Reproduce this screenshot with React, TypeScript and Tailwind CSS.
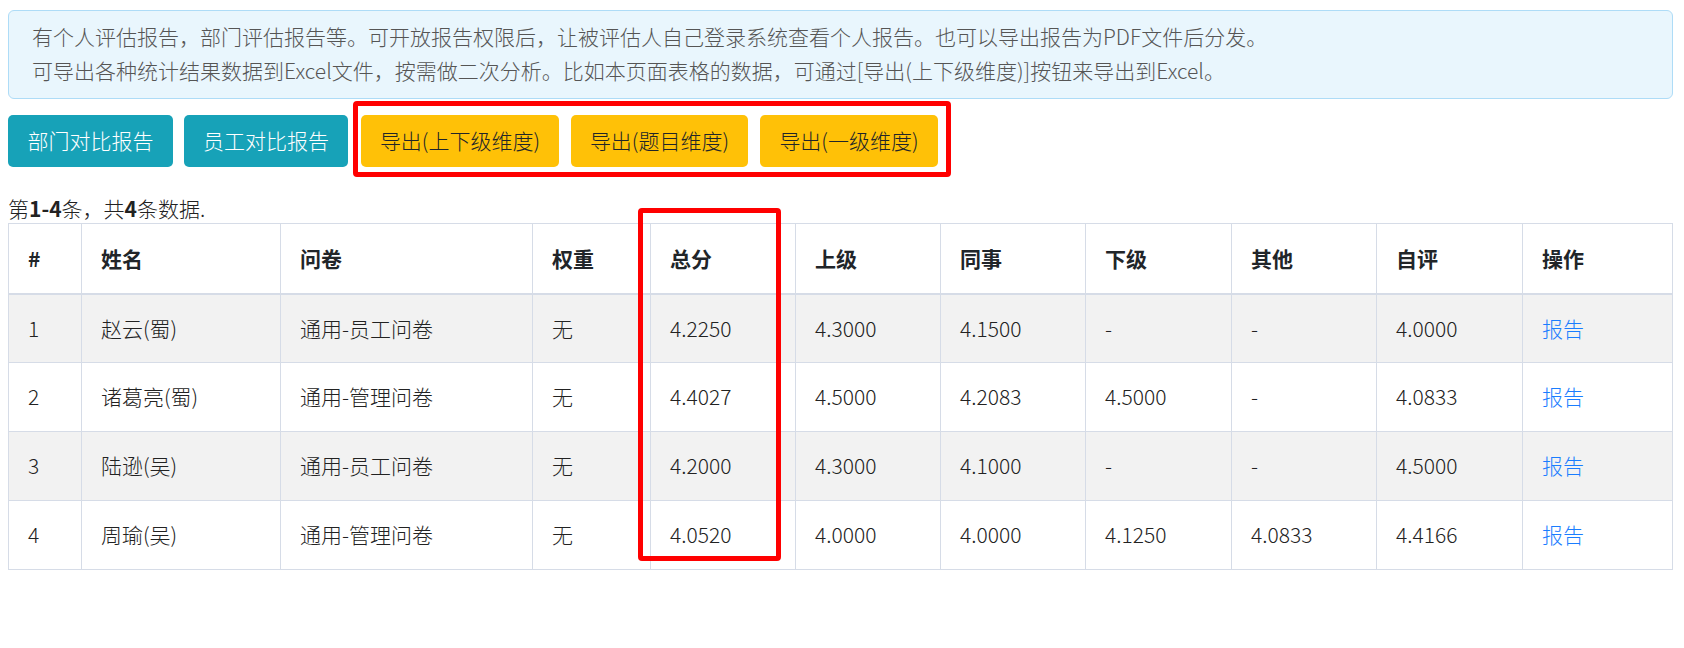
import React from "react";

const rows = [
  ["1", "赵云(蜀)", "通用-员工问卷", "无", "4.2250", "4.3000", "4.1500", "-", "-", "4.0000"],
  ["2", "诸葛亮(蜀)", "通用-管理问卷", "无", "4.4027", "4.5000", "4.2083", "4.5000", "-", "4.0833"],
  ["3", "陆逊(吴)", "通用-员工问卷", "无", "4.2000", "4.3000", "4.1000", "-", "-", "4.5000"],
  ["4", "周瑜(吴)", "通用-管理问卷", "无", "4.0520", "4.0000", "4.0000", "4.1250", "4.0833", "4.4166"],
];

const widths = [73, 199, 252, 118, 145, 145, 145, 146, 145, 146, 150];
const heads = ["#", "姓名", "问卷", "权重", "总分", "上级", "同事", "下级", "其他", "自评", "操作"];

export default function App() {
  return (
    <div className="relative w-[1684px] h-[648px] bg-white text-[21px] font-light text-[#212529] font-['Noto_Sans_CJK_SC','Noto_Sans',sans-serif]">
      <div className="ml-2 w-[1665px] pt-[10px]">
        <div className="h-[89px] rounded-[6px] border border-[#aedcf7] bg-[#e9f6fd] px-[23px] pt-[8px] leading-[34px] text-[#555]">
          <div>有个人评估报告，部门评估报告等。可开放报告权限后，让被评估人自己登录系统查看个人报告。也可以导出报告为PDF文件后分发。</div>
          <div>可导出各种统计结果数据到Excel文件，按需做二次分析。比如本页面表格的数据，可通过[导出(上下级维度)]按钮来导出到Excel。</div>
        </div>

        <div className="mt-4 flex h-[52px]">
          <button className="w-[165px] h-[52px] rounded-[5px] bg-[#17a2b8] text-white">部门对比报告</button>
          <button className="ml-[11px] w-[164px] h-[52px] rounded-[5px] bg-[#17a2b8] text-white">员工对比报告</button>
          <button className="ml-[13px] w-[198px] h-[52px] rounded-[5px] bg-[#ffc107] text-[#212529]">导出(上下级维度)</button>
          <button className="ml-[12px] w-[177px] h-[52px] rounded-[5px] bg-[#ffc107] text-[#212529]">导出(题目维度)</button>
          <button className="ml-[12px] w-[178px] h-[52px] rounded-[5px] bg-[#ffc107] text-[#212529]">导出(一级维度)</button>
        </div>

        <div className="mt-[26px] h-[30px] leading-[30px] text-[#222]">
          第<b className="font-bold">1-4</b>条，共<b className="font-bold">4</b>条数据.
        </div>

        <table className="w-[1664px] table-fixed border-collapse border border-[#d6dce7]">
          <colgroup>
            {widths.map((w, i) => (
              <col key={i} style={{ width: w }} />
            ))}
          </colgroup>
          <thead>
            <tr className="h-[70px]">
              {heads.map((h, i) => (
                <th
                  key={i}
                  className="border border-b-2 border-[#d6dce7] pl-[19px] text-left font-bold text-[#212529]"
                >
                  {h}
                </th>
              ))}
            </tr>
          </thead>
          <tbody>
            {rows.map((r, ri) => (
              <tr key={ri} className={ri % 2 === 0 ? "h-[69px] bg-[#f2f2f2]" : "h-[69px] bg-white"}>
                {r.map((c, ci) => (
                  <td key={ci} className="border border-[#d6dce7] pl-[19px] text-[#222]">
                    {c}
                  </td>
                ))}
                <td className="border border-[#d6dce7] pl-[19px] text-[#1a7dff]">报告</td>
              </tr>
            ))}
          </tbody>
        </table>
      </div>

      <div className="absolute left-[353px] top-[101px] w-[598px] h-[76px] rounded-[4px] border-[5px] border-[#ff0000]" />
      <div className="absolute left-[638px] top-[208px] w-[143px] h-[353px] rounded-[4px] border-[5px] border-[#ff0000]" />
    </div>
  );
}
